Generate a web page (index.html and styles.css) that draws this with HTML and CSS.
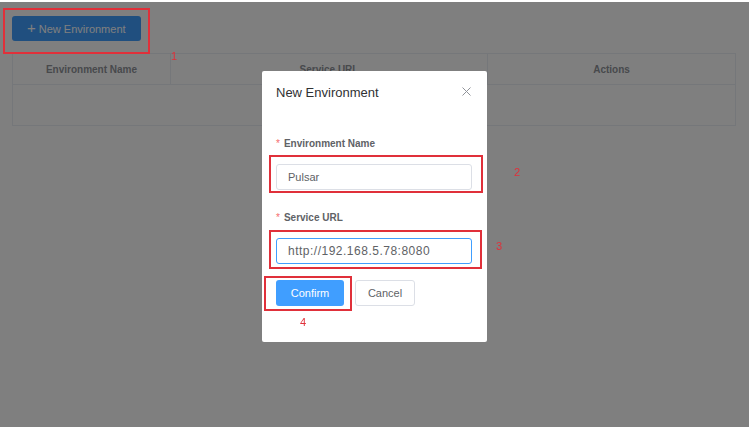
FILE: index.html
```html
<!DOCTYPE html>
<html lang="en">
<head>
    <meta charset="UTF-8">
    <meta name="viewport" content="width=device-width, initial-scale=1.0">
    <title>Pulsar Manager - Environments</title>
    <link rel="stylesheet" href="styles.css">
</head>
<body>
    <!-- Environment list page -->
    <div class="page">
        <button class="new-button">
            <span class="plus">+</span>New Environment
        </button>

        <table class="env-table">
            <thead>
                <tr>
                    <th class="col-name">Environment Name</th>
                    <th class="col-url">Service URL</th>
                    <th class="col-actions">Actions</th>
                </tr>
            </thead>
            <tbody>
                <tr>
                    <td colspan="3" class="empty">No Data</td>
                </tr>
            </tbody>
        </table>
    </div>

    <!-- Modal for a new environment -->
    <div class="modal-overlay">
        <div class="modal-content">
            <div class="modal-header">
                <h2 class="modal-title">New Environment</h2>
                <button class="close-button" aria-label="Close">
                    <svg width="9" height="9" viewBox="0 0 9 9">
                        <path d="M0.5 0.5 L8.5 8.5 M8.5 0.5 L0.5 8.5" stroke="#909399" stroke-width="1" fill="none"/>
                    </svg>
                </button>
            </div>
            <form class="env-form">
                <div class="form-group">
                    <label for="env-name"><span class="required">*</span>Environment Name</label>
                    <input type="text" id="env-name" class="text-input" value="Pulsar">
                </div>
                <div class="form-group">
                    <label for="service-url"><span class="required">*</span>Service URL</label>
                    <input type="text" id="service-url" class="text-input url-input is-focus" value="http://192.168.5.78:8080">
                </div>
                <div class="form-buttons">
                    <button type="submit" class="confirm-button">Confirm</button>
                    <button type="button" class="cancel-button">Cancel</button>
                </div>
            </form>
        </div>
    </div>

    <!-- Step annotations drawn over the screenshot -->
    <div class="mark mark-1"></div>
    <div class="mark mark-2"></div>
    <div class="mark mark-3"></div>
    <div class="mark mark-4"></div>
    <span class="step step-1">1</span>
    <span class="step step-2">2</span>
    <span class="step step-3">3</span>
    <span class="step step-4">4</span>
</body>
</html>
```
FILE: styles.css
```css
/* General Styles */
html, body {
    height: 100%;
}

body {
    font-family: 'Liberation Sans', Arial, sans-serif;
    margin: 0;
    padding: 0;
    background-color: #fff;
    color: #606266;
    overflow: hidden;
}

.page {
    padding: 16px 12px;
}

/* New environment button */
.new-button {
    display: flex;
    align-items: center;
    height: 25px;
    padding: 0 15px 0 15px;
    background-color: #409eff;
    border: none;
    border-radius: 3px;
    color: #fff;
    font-family: inherit;
    font-size: 11px;
}

.plus {
    font-size: 15px;
    margin-right: 3px;
    line-height: 1;
    position: relative;
    top: -1px;
}

/* Table */
.env-table {
    width: 724px;
    margin-top: 12px;
    border-collapse: collapse;
}

.env-table th {
    height: 30px;
    padding: 0;
    border: 1px solid #ebeef5;
    font-size: 10px;
    font-weight: bold;
    color: #909399;
    text-align: center;
}

.col-name {
    width: 157px;
}

.col-url {
    width: 316px;
}

.env-table td {
    height: 40px;
    padding: 0;
    border: 1px solid #ebeef5;
    text-align: center;
    font-size: 10px;
    color: #909399;
}

/* Modal Styles */
.modal-overlay {
    position: fixed;
    top: 2px;
    left: 0;
    right: 0;
    bottom: 0;
    background-color: rgba(0, 0, 0, 0.5);
    display: flex;
    justify-content: center;
    align-items: flex-start;
}

.modal-content {
    margin-top: 69px;
    width: 225px;
    height: 271px;
    box-sizing: border-box;
    padding: 13px 14px 0 14px;
    background-color: #fff;
    border-radius: 2px;
}

.modal-header {
    display: flex;
    justify-content: space-between;
    align-items: flex-start;
}

.modal-title {
    margin: 0;
    font-size: 13px;
    line-height: 18px;
    font-weight: normal;
    color: #303133;
}

.close-button {
    background: none;
    border: none;
    padding: 0;
    margin: 3px 2px 0 0;
    line-height: 0;
}

/* Form Styles */
.env-form {
    margin-top: 35px;
}

.form-group {
    margin-bottom: 21px;
}

label {
    display: block;
    font-size: 10px;
    line-height: 14px;
    font-weight: bold;
    color: #606266;
    margin-bottom: 13px;
}

.required {
    color: #f56c6c;
    font-weight: normal;
    margin-right: 4px;
}

.text-input {
    display: block;
    width: 196px;
    height: 26px;
    box-sizing: border-box;
    padding: 0 11px;
    border: 1px solid #dcdfe6;
    border-radius: 3px;
    font-family: inherit;
    font-size: 11px;
    color: #606266;
    outline: none;
}

.url-input {
    font-size: 12px;
    letter-spacing: 0.5px;
}

.is-focus {
    border-color: #409eff;
}

.form-buttons {
    display: flex;
    gap: 11px;
    margin-top: -5px;
}

.confirm-button,
.cancel-button {
    height: 26px;
    border-radius: 3px;
    font-family: inherit;
    font-size: 11px;
}

.confirm-button {
    width: 68px;
    background-color: #409eff;
    border: none;
    color: #fff;
}

.cancel-button {
    width: 60px;
    background-color: #fff;
    border: 1px solid #dcdfe6;
    color: #606266;
}

/* Annotations */
.mark {
    position: absolute;
    border: 2px solid #e0303a;
    box-sizing: border-box;
}

.mark-1 { left: 3px; top: 8px; width: 147px; height: 46px; }
.mark-2 { left: 269px; top: 155px; width: 214px; height: 38px; }
.mark-3 { left: 269px; top: 230px; width: 213px; height: 39px; }
.mark-4 { left: 264px; top: 276px; width: 88px; height: 35px; }

.step {
    position: absolute;
    font-size: 11px;
    line-height: 1;
    color: #e0303a;
}

.step-1 { left: 171px; top: 51px; }
.step-2 { left: 514px; top: 167px; }
.step-3 { left: 496px; top: 241px; }
.step-4 { left: 300px; top: 317px; }
```
